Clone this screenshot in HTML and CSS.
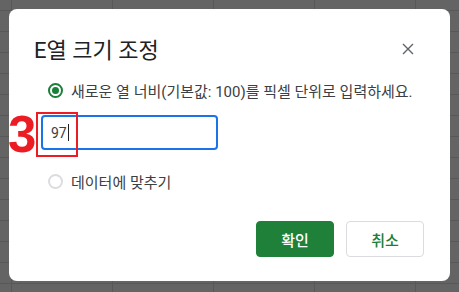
FILE: index.html
```html
<!DOCTYPE html>
<html lang="ko">
<head>
    <meta charset="UTF-8">
    <title>E열 크기 조정</title>
    <link rel="stylesheet" href="styles.css">
</head>
<body>
    <div class="overlay">
        <div class="dialog">
            <div class="dialog-head">
                <h1>E열 크기 조정</h1>
                <span class="close">
                    <svg width="12" height="12" viewBox="0 0 12 12"><path d="M1 1L11 11M11 1L1 11" stroke="#5f6368" stroke-width="1.4" fill="none"/></svg>
                </span>
            </div>
            <div class="options">
                <label class="radio-row">
                    <span class="radio checked"></span>
                    <span>새로운 열 너비(기본값: 100)를 픽셀 단위로 입력하세요.</span>
                </label>
                <div class="input-wrap">
                    <span class="mark-num">3</span>
                    <span class="mark-box"></span>
                    <div class="width-input">97<span class="caret"></span></div>
                </div>
                <label class="radio-row">
                    <span class="radio"></span>
                    <span>데이터에 맞추기</span>
                </label>
            </div>
            <div class="actions">
                <button class="btn primary">확인</button>
                <button class="btn">취소</button>
            </div>
        </div>
    </div>
</body>
</html>
```

FILE: styles.css
```css
body {
    margin: 0;
    font-family: Roboto, 'Noto Sans CJK KR', sans-serif;
    background-color: #646464;
    background-image:
        linear-gradient(#585858 1px, transparent 1px),
        linear-gradient(90deg, #585858 1px, transparent 1px);
    background-size: 101px 21px;
    background-position: 11px 10px;
    width: 459px;
    height: 292px;
    overflow: hidden;
}
.overlay {
    padding: 9px;
}
.dialog {
    width: 441px;
    height: 272px;
    box-sizing: border-box;
    background: #fff;
    border-radius: 8px;
    padding: 22px 25px 0 25px;
    display: flex;
    flex-direction: column;
}
.dialog-head {
    display: flex;
    justify-content: space-between;
    align-items: center;
    height: 34px;
}
h1 {
    margin: 0;
    font-size: 22px;
    font-weight: 400;
    color: #202124;
}
.close {
    display: flex;
    margin-right: 11px;
    margin-top: 2px;
}
.options {
    padding-left: 7px;
    margin-top: 15px;
}
.radio-row {
    display: flex;
    align-items: center;
    gap: 8px;
    font-size: 15px;
    color: #3c4043;
    padding-left: 7px;
    height: 20px;
}
.radio {
    width: 11px;
    height: 11px;
    border: 2px solid #dadce0;
    border-radius: 50%;
    flex: none;
    position: relative;
}
.radio.checked {
    border-color: #188038;
}
.radio.checked::after {
    content: '';
    position: absolute;
    left: 2px;
    top: 2px;
    width: 7px;
    height: 7px;
    border-radius: 50%;
    background: #188038;
}
.input-wrap {
    position: relative;
    margin: 15px 0 21px 0;
}
.width-input {
    width: 177px;
    height: 35px;
    box-sizing: border-box;
    border: 2px solid #1a73e8;
    border-radius: 4px;
    padding-left: 8px;
    display: flex;
    align-items: center;
    font-size: 14px;
    color: #3c4043;
}
.caret {
    display: inline-block;
    width: 1px;
    height: 17px;
    background: #202124;
    margin-left: 1px;
}
.mark-num {
    position: absolute;
    left: -33px;
    top: -3px;
    font-family: 'Liberation Sans', sans-serif;
    font-weight: 700;
    font-size: 51px;
    line-height: 46px;
    color: #ec1c24;
}
.mark-box {
    position: absolute;
    left: -5px;
    top: -3px;
    width: 38px;
    height: 41px;
    border: 2px solid #ec1c24;
}
.actions {
    display: flex;
    justify-content: flex-end;
    gap: 12px;
    margin-top: 30px;
    margin-right: 1px;
}
.btn {
    width: 78px;
    height: 36px;
    border: 1px solid #dadce0;
    border-radius: 4px;
    background: #fff;
    color: #188038;
    font-family: Roboto, 'Noto Sans CJK KR', sans-serif;
    font-size: 15px;
    font-weight: 500;
}
.btn.primary {
    background: #1e8039;
    border-color: #1e8039;
    color: #fff;
}
```
